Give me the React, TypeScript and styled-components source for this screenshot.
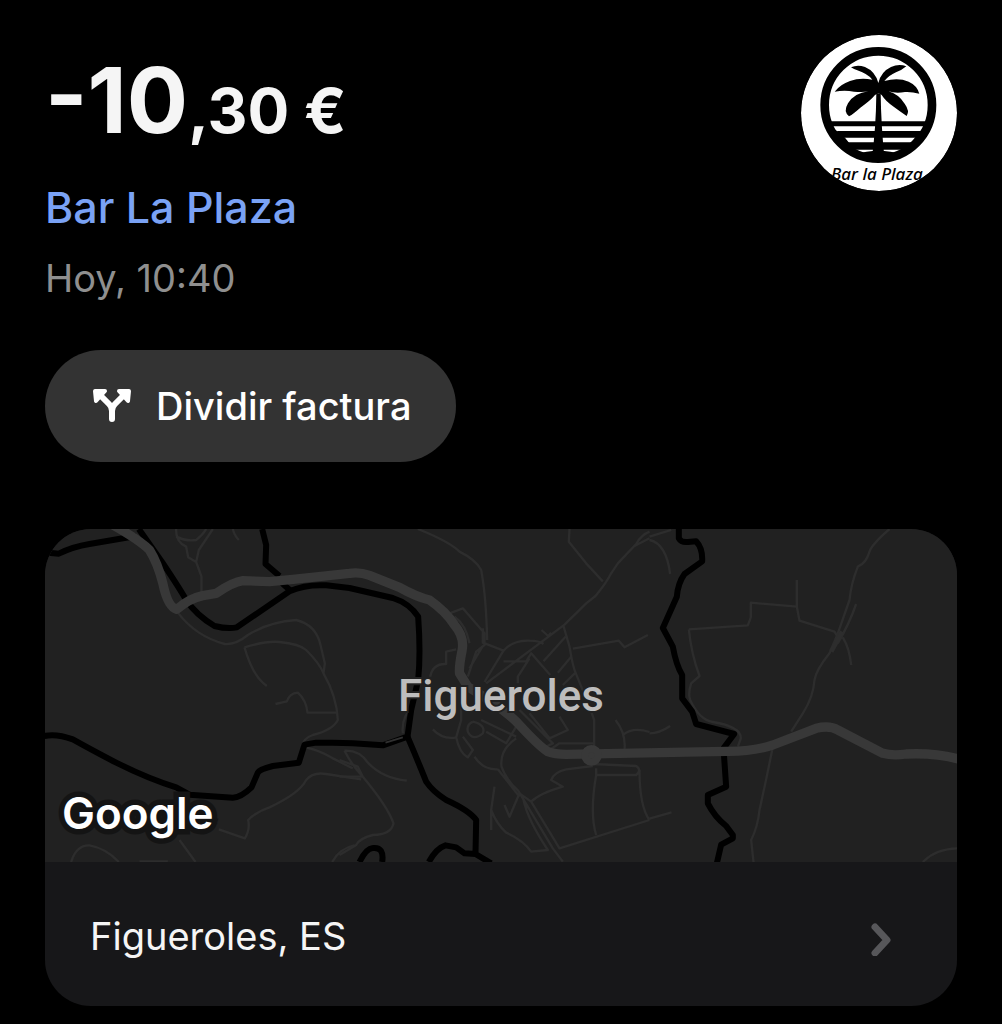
import React from "react";
import styled, { createGlobalStyle } from "styled-components";

const GlobalStyle = createGlobalStyle`
  * { box-sizing: border-box; }
  body {
    margin: 0;
    background: #000;
    color: #f5f5f5;
    font-family: Inter, "Liberation Sans", sans-serif;
  }
`;

const Page = styled.main`
  padding: 35px 45px 18px;
`;

const Header = styled.header`
  display: flex;
  justify-content: space-between;
  align-items: flex-start;
`;

const Summary = styled.div`
  display: flex;
  flex-direction: column;
  align-items: flex-start;
  padding-top: 11px;
`;

const Amount = styled.h1`
  margin: 0 0 27px;
  font-size: 91px;
  line-height: 108px;
  font-weight: 700;
  white-space: pre;
`;

const Cents = styled.span`
  font-size: 62px;
  line-height: 1;
`;

const Merchant = styled.a`
  margin-bottom: 21px;
  color: #7aa2f5;
  font-size: 43px;
  line-height: 52px;
  font-weight: 500;
  text-decoration: none;
`;

const When = styled.time`
  color: #8f8f8f;
  font-size: 38px;
  line-height: 48px;
`;

const Avatar = styled.svg`
  flex: none;
  width: 156px;
  height: 156px;
  border-radius: 50%;
`;

const SplitButton = styled.button`
  display: flex;
  align-items: center;
  gap: 24px;
  height: 112px;
  margin: 48px 0 67px;
  padding: 0 45px 0 47px;
  border: 0;
  border-radius: 56px;
  background: #333;
  color: #fff;
  font: inherit;
  font-size: 38px;
  font-weight: 500;
`;

const SplitIcon = styled.svg`
  width: 40px;
  height: 40px;
`;

const LocationCard = styled.section`
  overflow: hidden;
  border-radius: 46px;
  background: #171719;
`;

const MapArea = styled.div`
  position: relative;
  height: 333px;
  background: #212121;
`;

const MapDrawing = styled.svg`
  display: block;
  width: 100%;
  height: 100%;
  fill: none;
  stroke-linejoin: round;
`;

const TownLabel = styled.span`
  position: absolute;
  left: 50%;
  top: 50%;
  transform: translate(-50%, -50%);
  color: #bdbdbd;
  font: 500 44px/52px Roboto, sans-serif;
  -webkit-text-stroke: 4px #212121;
  paint-order: stroke fill;
`;

const MapBrand = styled.span`
  position: absolute;
  left: 17px;
  bottom: 21px;
  color: #fff;
  font: 600 44px/56px Inter, sans-serif;
  -webkit-text-stroke: 11px #141414;
  paint-order: stroke fill;
`;

const PlaceLink = styled.a`
  display: flex;
  align-items: center;
  justify-content: space-between;
  height: 144px;
  padding: 4px 64px 0 45px;
  color: #f5f5f5;
  font-size: 38px;
  text-decoration: none;
`;

const Chevron = styled.svg`
  width: 24px;
  height: 40px;
`;

function PalmLogo() {
  return (
    <Avatar viewBox="34 30 468 468" role="img" aria-label="Bar La Plaza">
      <circle cx="268" cy="264" r="234" fill="#fff" />
      <circle cx="266" cy="240" r="161" fill="none" stroke="#000" strokeWidth="26" />
      <path d="M118 289H414V304H124ZM142 318H400L392 338H150Q146 328 142 318ZM148 352H386L368 374H166ZM196 388Q266 366 338 388L318 402Q266 420 214 402Z" />
      <path d="M118 304L142 318L166 338L196 376L182 386L134 338ZM414 304L396 318L376 338L344 376L352 386L398 338Z" />
      <path d="M260 205H273Q274 300 285 405H246Q259 310 260 205Z" />
      <path d="M266 174Q257 139 226 126Q203 118 184 127Q193 133 203 136Q235 147 248 164Q211 157 181 168Q152 178 135 200Q165 195 193 200Q220 203 236 199Q194 204 175 235Q160 260 178 274Q192 266 212 248Q243 226 256 210L267 204L276 210Q288 229 312 245Q331 259 351 273Q361 258 345 236Q326 207 296 199Q319 206 346 201Q367 200 389 206Q382 181 357 170Q326 157 284 168Q298 151 319 142Q336 136 350 124Q328 115 304 126Q274 140 266 174Z" />
      <text x="124" y="466" fontFamily="Noto Sans, sans-serif" fontSize="51" fontWeight="500" fontStyle="italic">
        Bar la Plaza
      </text>
    </Avatar>
  );
}

/* Map units are a third of a CSS pixel. */
function TownMap() {
  return (
    <MapDrawing viewBox="15 27 2739 999" preserveAspectRatio="xMidYMid slice" aria-hidden="true">
      <g stroke="#2d2d2d" strokeWidth="7">
        <path d="M410 27Q408 65 440 80L446 112L470 126L486 170V222M520 27L478 90L470 126M410 50Q440 65 470 60Q490 45 500 27M580 27Q584 46 598 60" />
        <path d="M415 278Q470 350 556 372Q590 374 625 345Q690 305 770 300Q830 315 843 375L856 430L852 460M615 382Q680 362 720 366Q780 372 800 390Q840 430 852 460Q892 530 895 600Q880 630 820 645Q790 655 788 680Q840 690 880 715L940 745" />
        <path d="M615 382Q640 470 682 498M708 552L742 544Q750 520 775 518Q800 540 804 578H890" />
        <path d="M538 928L616 955Q632 930 626 900Q650 875 690 862Q780 820 800 780Q820 755 860 762L965 778M95 1026Q110 975 150 976Q200 985 238 1026M420 960L468 1026M878 1026Q900 985 945 976M300 1024H385" />
      </g>
      <g stroke="#2d2d2d" strokeWidth="7" transform="translate(900 0)">
        <path d="M235 27Q330 65 360 95Q410 120 425 150Q440 230 443 360M690 27L688 65L740 130L790 184M930 35Q905 45 890 72L835 130L815 160Q800 190 768 228L740 250L675 314L440 490M930 55L885 78M330 280L370 265L435 340V375L410 395L385 470M345 290Q380 315 390 370M430 325V368L492 392M430 378L390 445M272 470Q280 430 320 432V395L350 388M435 486L492 392Q520 360 570 362Q600 362 612 372M492 424H560L575 400L632 465M570 415L535 470V490M606 330L626 348L635 338M672 318L690 380Q700 440 708 458L670 495M612 424L678 350M655 458L695 410M700 386L838 362L855 382L925 345M708 458L750 560L764 600V690" />
        <path d="M280 628Q310 660 350 652L365 600V560M350 652Q360 700 385 712L400 690L370 650M405 710Q430 750 475 748M400 605Q440 615 430 640Q400 665 385 635Q380 615 400 605M425 600L530 650M440 635L500 670L530 620M530 655Q480 690 486 740Q500 780 536 812L640 985L670 1025M475 748L540 830M540 570L640 670L600 690M570 580L630 655L685 630L660 590M630 690L660 670H764M760 738L680 748Q645 755 635 780L670 800Q600 820 575 845L540 820L510 890L495 855M552 840Q565 900 625 990L575 995Q550 960 500 938Q470 910 455 870L465 800M455 870V930M575 845L660 985L930 900M770 945Q750 880 770 765H890Q908 750 890 738L760 732M770 765V745M900 750Q900 860 930 900M828 600Q860 640 855 690M850 645Q880 620 930 636" />
        <path d="M0 770H70L55 740L0 720M70 770Q145 860 162 910Q155 945 100 945Q60 955 50 975L0 1005M15 692Q40 740 70 770M15 692Q60 690 85 728Q130 775 202 782M220 560Q185 590 190 640" />
      </g>
      <g stroke="#2d2d2d" strokeWidth="7" transform="translate(1830 0)">
        <path d="M0 50L65 30M0 60Q50 70 62 162M0 640Q30 640 62 618M0 896L66 877M720 27Q665 75 660 95Q650 130 625 140Q605 190 600 240L565 340L540 400Q500 450 495 480Q492 530 460 580L425 635M620 252Q600 310 565 370M580 352Q600 385 605 435M118 328L295 316L304 292V248L442 260V180M442 260L450 302L555 335L570 360M118 328Q125 400 150 468L125 490Q115 520 122 540Q150 600 190 606Q275 620 274 655L265 680M368 690Q350 780 330 870Q325 920 305 960L312 1026M820 1026Q860 985 930 985" />
        <path d="M545 395L578 335" strokeWidth="14" />
      </g>
      <g stroke="#000" strokeWidth="18">
        <path d="M15 97L58 101Q100 80 150 72Q220 60 290 48M298 27L370 130Q420 205 440 240Q470 285 525 318Q565 328 592 322L750 214Q800 192 860 196L930 204L1060 234Q1110 250 1136 290Q1144 400 1136 480L1115 570L1104 650L1030 676L940 670L880 668H830L795 674L778 728L700 738Q660 748 655 758L636 802Q605 832 580 833L450 824L410 802Q330 778 230 728Q150 686 100 658Q50 640 15 648" />
        <path d="M668 27L680 75L678 132L720 168M728 190L755 214M1104 650Q1130 710 1160 785Q1180 815 1220 840Q1290 872 1310 900L1308 1000M960 1026Q980 985 1000 984Q1035 980 1028 1026M1168 1026Q1190 985 1218 976L1250 982L1275 1000L1308 1002L1355 1030" />
        <path d="M1918 27V55Q1925 68 1945 66L1970 64Q1990 85 1988 124L1935 162Q1915 190 1912 230L1870 324L1900 380Q1910 435 1928 465V535L1958 575L1970 612L2084 642L2052 685L2060 800L2005 825V850Q2025 890 2060 918L2080 945V955L2045 974L2032 1030" />
      </g>
      <path d="M1038 668L1090 652" stroke="#303030" strokeWidth="6" />
      <g stroke="#383838" strokeWidth="28">
        <path d="M220 15Q300 60 330 90Q355 130 370 190Q385 262 412 268Q450 235 490 227L530 220Q580 186 610 182L690 185L760 178L930 160Q960 155 990 166L1080 202Q1130 230 1170 240Q1220 275 1245 315Q1275 350 1268 390Q1258 440 1260 460L1285 500Q1400 570 1440 615Q1500 680 1525 695Q1545 703 1580 703L2060 694Q2140 695 2200 675L2330 625Q2370 615 2395 630L2530 700Q2560 708 2600 702Q2690 698 2760 718" />
        <circle cx="1656" cy="706" r="20" strokeWidth="22" />
      </g>
    </MapDrawing>
  );
}

export default function App() {
  return (
    <>
      <GlobalStyle />
      <Page>
        <Header>
          <Summary>
            <Amount>
              -10<Cents>,30 €</Cents>
            </Amount>
            <Merchant href="#comercio">Bar La Plaza</Merchant>
            <When>Hoy, 10:40</When>
          </Summary>
          <PalmLogo />
        </Header>
        <SplitButton type="button">
          <SplitIcon viewBox="0 0 40 40" fill="none" stroke="#fff" aria-hidden="true">
            <path d="M20 33V25Q20 21 17 18L10 11M20 25Q20 21 23 18L30 11" strokeWidth="6" strokeLinecap="round" />
            <path d="M3 5H13L4 15ZM37 5H27L36 15Z" fill="#fff" strokeWidth="4" strokeLinejoin="round" />
          </SplitIcon>
          Dividir factura
        </SplitButton>
        <LocationCard>
          <MapArea>
            <TownMap />
            <TownLabel>Figueroles</TownLabel>
            <MapBrand>Google</MapBrand>
          </MapArea>
          <PlaceLink href="#mapa">
            Figueroles, ES
            <Chevron viewBox="0 0 24 40" fill="none" aria-hidden="true">
              <path d="M6 11L18 24L6 37" stroke="#57575a" strokeWidth="7" strokeLinecap="round" strokeLinejoin="round" />
            </Chevron>
          </PlaceLink>
        </LocationCard>
      </Page>
    </>
  );
}
